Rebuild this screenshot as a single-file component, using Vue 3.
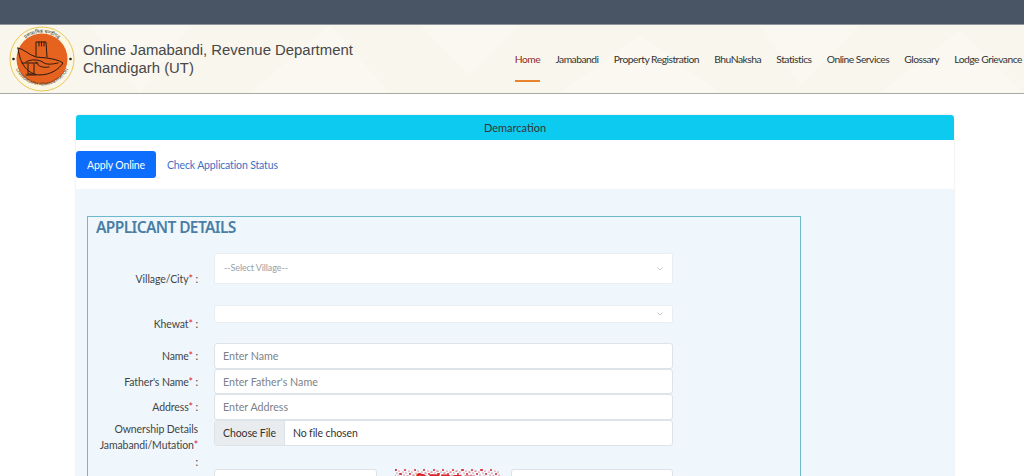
<template>
  <div class="page">
    <div class="topbar"></div>
    <header class="site-header">
      <svg class="header-pattern" viewBox="0 0 1024 68" preserveAspectRatio="none" aria-hidden="true">
        <polygon v-for="(p, i) in patches" :key="i" :points="p" fill="#ffffff" fill-opacity="0.22" />
      </svg>
      <div class="brand">
        <svg class="logo" viewBox="0 0 66 66" width="66" height="66">
          <defs>
            <path id="arcTop" d="M7 33 A26 26 0 0 1 59 33" />
            <path id="arcBottom" d="M3.500 30 A29.500 29.500 0 0 0 62.500 30" />
          </defs>
          <circle cx="33" cy="33" r="32" fill="#fbf7e2" stroke="#e9c757" stroke-width="1" />
          <circle cx="33" cy="33" r="25.500" fill="#e5621f" />
          <circle cx="4.500" cy="33" r="1.300" fill="#222" />
          <circle cx="61.500" cy="33" r="1.300" fill="#222" />
          <text class="logo-top"><textPath href="#arcTop" startOffset="50%" text-anchor="middle">प्रशासनिक चण्डीगढ़</textPath></text>
          <text class="logo-bottom"><textPath href="#arcBottom" startOffset="50%" text-anchor="middle">CHANDIGARH ADMINISTRATION</textPath></text>
          <g fill="none" stroke="#2c1a10" stroke-width="1" stroke-linejoin="round" stroke-linecap="round">
            <path d="M27 30 L27 16 L37 16 L38 31" />
            <path d="M30 16 V20 M32.500 16 V20 M35 16 V20" />
            <path d="M9 22 C15 23 20 29 27 31 L38 32 C44 33 50 34 54 37 C50 43 42 49 30 49 C20 48 11 40 9 22 Z" />
            <path d="M17 36 C22 33 30 33 35 37 C39 39 44 38 49 37 M27 36 C29 41 35 42 40 41" />
            <path d="M13 37 H29 M19 38 L19 48 H25 L25 38 M17 49 H27" />
          </g>
        </svg>
        <div class="brand-text">
          <div>Online Jamabandi, Revenue Department</div>
          <div>Chandigarh (UT)</div>
        </div>
      </div>
      <nav class="main-nav">
        <a v-for="(item, i) in navItems" :key="item" :class="{ active: i === 0 }">{{ item }}</a>
      </nav>
    </header>

    <main class="content">
      <section class="card">
        <div class="card-title">Demarcation</div>
        <div class="tabs">
          <a class="tab tab-active">Apply Online</a>
          <a class="tab">Check Application Status</a>
        </div>
        <div class="panel">
          <div class="fieldset">
            <h2 class="legend">APPLICANT DETAILS</h2>

            <div class="row row-village">
              <label>Village/City<span class="req">*</span> :</label>
              <div class="select select-village">
                <span>--Select Village--</span>
                <svg class="chev" width="6" height="4" viewBox="0 0 6 4"><path d="M0.500 0.500 L3 3 L5.500 0.500" fill="none" stroke="#c3ccd3" /></svg>
              </div>
            </div>

            <div class="row row-khewat">
              <label>Khewat<span class="req">*</span> :</label>
              <div class="select select-khewat">
                <svg class="chev" width="6" height="4" viewBox="0 0 6 4"><path d="M0.500 0.500 L3 3 L5.500 0.500" fill="none" stroke="#c3ccd3" /></svg>
              </div>
            </div>

            <div v-for="f in textFields" :key="f.label" class="row row-input">
              <label>{{ f.label }}<span class="req">*</span> :</label>
              <input class="input" type="text" :placeholder="f.placeholder" />
            </div>

            <div class="row row-file">
              <label>Ownership Details Jamabandi/Mutation<span class="req">*</span> :</label>
              <div class="file">
                <span class="file-btn">Choose File</span>
                <span class="file-name">No file chosen</span>
              </div>
            </div>

            <div class="row row-captcha">
              <label></label>
              <div class="captcha-line">
                <input class="input captcha-input" type="text" />
                <svg class="captcha" width="105" height="40" viewBox="0 0 105 40" aria-label="captcha">
                  <circle v-for="(d, i) in dots" :key="i" :cx="d.x" :cy="d.y" :r="d.r" fill="#d8232a" />
                  <text x="20" y="17" class="captcha-text" transform="rotate(2 20 17)">DEPPE</text>
                </svg>
                <input class="input captcha-answer" type="text" />
              </div>
            </div>
          </div>
        </div>
      </section>
    </main>
  </div>
</template>

<script setup>
const navItems = ['Home', 'Jamabandi', 'Property Registration', 'BhuNaksha', 'Statistics', 'Online Services', 'Glossary', 'Lodge Grievance']

const textFields = [
  { label: 'Name', placeholder: 'Enter Name' },
  { label: "Father's Name", placeholder: "Enter Father's Name" },
  { label: 'Address', placeholder: 'Enter Address' },
]

const patches = [
  '90,0 190,0 140,68',
  '250,68 330,0 390,68',
  '420,0 520,0 470,50',
  '560,68 640,10 720,68',
  '760,0 860,0 800,60',
  '880,68 960,5 1024,68',
]

// speckle around the captcha word
const dots = []
for (let i = 0; i < 110; i++) {
  dots.push({
    x: (i * 37) % 105,
    y: ((i * 13) % 8) + 1,
    r: i % 4 === 0 ? 1 : 0.6,
  })
}
</script>

<style>
html, body {
  margin: 0;
  height: 476px;
  overflow: hidden;
  background: #fff;
}
</style>

<style scoped>
.page {
  font-family: "Lato", "Open Sans", sans-serif;
  color: #444;
}

.topbar {
  height: 25px;
  background: #495464;
  border-bottom: 1px solid #8d959f;
  box-sizing: border-box;
}

.site-header {
  position: relative;
  height: 69px;
  box-sizing: border-box;
  display: flex;
  justify-content: space-between;
  background: #f9f6ee;
  border-bottom: 1px solid #a8a8a4;
  overflow: hidden;
}

.header-pattern {
  position: absolute;
  inset: 0;
  width: 100%;
  height: 100%;
}

.brand {
  position: relative;
  display: flex;
  align-items: center;
  padding-left: 9px;
  gap: 8px;
}

.logo-top {
  font: 5px "Noto Sans", sans-serif;
  fill: #333;
}

.logo-bottom {
  font: 4.200px "Liberation Sans", sans-serif;
  fill: #333;
}

.brand-text {
  font-family: "Liberation Sans", Arial, sans-serif;
  font-size: 14.900px;
  line-height: 18px;
  color: #474747;
}

.main-nav {
  position: relative;
  display: flex;
  gap: 15.200px;
  padding-right: 2px;
  font-size: 10.300px;
  letter-spacing: -0.500px;
  color: #333;
}

.main-nav a {
  display: block;
  height: 55px;
  line-height: 68px;
  white-space: nowrap;
}

.main-nav a.active {
  color: #8f2a24;
  border-bottom: 2px solid #e8822e;
}

.content {
  padding: 21px 70px 0 76px;
}

.card {
  background: #fff;
  box-shadow: 0 0 2px rgba(0, 0, 0, 0.12);
}

.card-title {
  height: 25px;
  line-height: 26px;
  text-align: center;
  font-size: 11px;
  color: #333;
  background: #0dcaf0;
  border-radius: 3px 3px 0 0;
}

.tabs {
  display: flex;
  height: 49px;
  padding-top: 11px;
  box-sizing: border-box;
}

.tab {
  height: 27px;
  line-height: 29px;
  padding: 0 11px;
  font-size: 10.500px;
  letter-spacing: -0.150px;
  color: #3b6fc4;
  border-radius: 3px;
}

.tab-active {
  background: #0d6efd;
  color: #fff;
}

.panel {
  background: #eff7fd;
  padding: 27px 153px 0 11px;
  height: 300px;
}

.fieldset {
  border: 1px solid #6cb9cb;
  height: 300px;
  box-sizing: border-box;
  padding: 0 127px 0 0;
}

.legend {
  margin: 0;
  padding: 0 0 0 8px;
  font-family: "Noto Sans", sans-serif;
  font-size: 15.500px;
  line-height: 20px;
  font-weight: 600;
  letter-spacing: -0.600px;
  color: #4a7ea5;
}

.row {
  display: flex;
  gap: 16px;
  padding-left: 10px;
  font-size: 10.500px;
  letter-spacing: -0.100px;
}

.row label {
  flex: 0 0 100px;
  min-width: 0;
  text-align: right;
  color: #444;
}

.req {
  color: #d9263a;
}

.row-village {
  margin-top: 16px;
  height: 52px;
}

.row-village label {
  padding-top: 20px;
}

.row-khewat {
  height: 38px;
}

.row-khewat label {
  padding-top: 13px;
}

.select {
  flex: 1;
  position: relative;
  box-sizing: border-box;
  background: #fff;
  border: 1px solid #e9eef2;
  border-radius: 2px;
}

.select-village {
  height: 31px;
  line-height: 28px;
  padding-left: 9px;
  font-size: 9px;
  color: #9aa0a6;
}

.select-khewat {
  height: 18px;
}

.chev {
  position: absolute;
  right: 9px;
  top: 50%;
  margin-top: -2px;
}

.row-input {
  height: 25.500px;
  align-items: center;
}

.row-input label {
  padding-top: 1px;
}

.input {
  flex: 1;
  width: 0;
  min-width: 0;
  box-sizing: border-box;
  height: 25.500px;
  padding: 0 8px;
  font: 10.700px "Lato", sans-serif;
  color: #444;
  background: #fff;
  border: 1px solid #dde3e8;
  border-radius: 3px;
  outline: none;
}

.input::placeholder {
  color: #7b828a;
  opacity: 1;
}

.row-file {
  height: 49px;
}

.row-file label {
  line-height: 16.500px;
  padding-top: 1px;
}

.file {
  flex: 1;
  display: flex;
  box-sizing: border-box;
  height: 26px;
  line-height: 24px;
  background: #fff;
  border: 1px solid #dde3e8;
  border-radius: 3px;
  overflow: hidden;
}

.file-btn {
  padding: 0 8px;
  background: #e9ecef;
  border-right: 1px solid #dde3e8;
  color: #333;
}

.file-name {
  padding-left: 8px;
  color: #333;
}

.captcha-line {
  flex: 1;
  min-width: 0;
  display: flex;
  align-items: flex-start;
}

.captcha-input {
  flex: 0 0 163px;
}

.captcha {
  flex: 0 0 105px;
  margin: 0 11px 0 18px;
}

.captcha-text {
  font: 700 18px "Liberation Sans", sans-serif;
  fill: #d8232a;
}

.captcha-answer {
  flex: 1;
}
</style>
